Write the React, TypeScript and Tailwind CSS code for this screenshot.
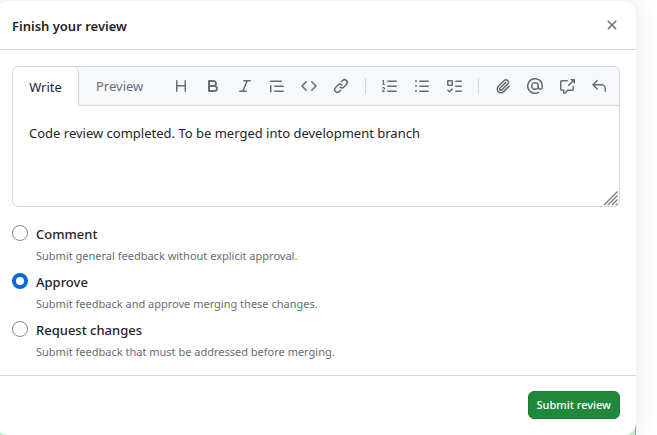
import { useState } from 'react';

type Tool = { label: string; path: string };

const toolGroups: Tool[][] = [
  [
    {
      label: 'Heading',
      path: 'M3.75 2a.75.75 0 0 1 .75.75V7h7V2.75a.75.75 0 0 1 1.5 0v10.5a.75.75 0 0 1-1.5 0V8.5h-7v4.75a.75.75 0 0 1-1.5 0V2.75A.75.75 0 0 1 3.75 2Z',
    },
    {
      label: 'Bold',
      path: 'M4 2h4.5a3.501 3.501 0 0 1 2.852 5.53A3.499 3.499 0 0 1 9.5 14H4a1 1 0 0 1-1-1V3a1 1 0 0 1 1-1Zm1 7v3h4.5a1.5 1.5 0 0 0 0-3Zm3.5-2a1.5 1.5 0 0 0 0-3H5v3Z',
    },
    {
      label: 'Italic',
      path: 'M6 2.75A.75.75 0 0 1 6.75 2h6.5a.75.75 0 0 1 0 1.5h-2.505l-3.858 9H9.25a.75.75 0 0 1 0 1.5h-6.5a.75.75 0 0 1 0-1.5h2.505l3.858-9H6.75A.75.75 0 0 1 6 2.75Z',
    },
    {
      label: 'Quote',
      path: 'M1.75 2.5h10.5a.75.75 0 0 1 0 1.5H1.75a.75.75 0 0 1 0-1.5Zm4 5h8.5a.75.75 0 0 1 0 1.5h-8.5a.75.75 0 0 1 0-1.5Zm0 5h8.5a.75.75 0 0 1 0 1.5h-8.5a.75.75 0 0 1 0-1.5ZM2.5 7.75v6a.75.75 0 0 1-1.5 0v-6a.75.75 0 0 1 1.5 0Z',
    },
    {
      label: 'Code',
      path: 'm11.28 3.22 4.25 4.25a.75.75 0 0 1 0 1.06l-4.25 4.25a.749.749 0 0 1-1.275-.326.749.749 0 0 1 .215-.734L13.94 8l-3.72-3.72a.749.749 0 0 1 .326-1.275.749.749 0 0 1 .734.215Zm-6.56 0a.751.751 0 0 1 1.042.018.751.751 0 0 1 .018 1.042L2.06 8l3.72 3.72a.749.749 0 0 1-.326 1.275.749.749 0 0 1-.734-.215L.47 8.53a.75.75 0 0 1 0-1.06Z',
    },
    {
      label: 'Link',
      path: 'm7.775 3.275 1.25-1.25a3.5 3.5 0 1 1 4.95 4.95l-2.5 2.5a3.5 3.5 0 0 1-4.95 0 .751.751 0 0 1 .018-1.042.751.751 0 0 1 1.042-.018 1.998 1.998 0 0 0 2.83 0l2.5-2.5a2.002 2.002 0 0 0-2.83-2.83l-1.25 1.25a.751.751 0 0 1-1.042-.018.751.751 0 0 1-.018-1.042Zm-4.69 9.64a1.998 1.998 0 0 0 2.83 0l1.25-1.25a.751.751 0 0 1 1.042.018.751.751 0 0 1 .018 1.042l-1.25 1.25a3.5 3.5 0 1 1-4.95-4.95l2.5-2.5a3.5 3.5 0 0 1 4.95 0 .751.751 0 0 1-.018 1.042.751.751 0 0 1-1.042.018 1.998 1.998 0 0 0-2.83 0l-2.5 2.5a1.998 1.998 0 0 0 0 2.83Z',
    },
  ],
  [
    {
      label: 'Numbered list',
      path: 'M5 3.25a.75.75 0 0 1 .75-.75h8.5a.75.75 0 0 1 0 1.5h-8.5A.75.75 0 0 1 5 3.25Zm0 5a.75.75 0 0 1 .75-.75h8.5a.75.75 0 0 1 0 1.5h-8.5A.75.75 0 0 1 5 8.25Zm0 5a.75.75 0 0 1 .75-.75h8.5a.75.75 0 0 1 0 1.5h-8.5a.75.75 0 0 1-.75-.75ZM.924 10.32a.5.5 0 0 1-.851-.525l.001-.001.001-.002.002-.004.007-.011c.097-.144.215-.273.348-.384.228-.19.588-.392 1.068-.392.468 0 .858.181 1.126.484.259.294.377.673.377 1.038 0 .987-.686 1.495-1.156 1.845l-.047.035c-.303.225-.522.4-.654.597h1.357a.5.5 0 0 1 0 1H.5a.5.5 0 0 1-.5-.5c0-1.005.692-1.52 1.167-1.875l.035-.025c.531-.396.8-.625.8-1.078a.57.57 0 0 0-.128-.376C1.806 10.068 1.695 10 1.5 10a.658.658 0 0 0-.429.163.835.835 0 0 0-.144.153ZM2.003 2.5V6h.503a.5.5 0 0 1 0 1H.5a.5.5 0 0 1 0-1h.503V3.308l-.28.14a.5.5 0 0 1-.446-.895l1.003-.5a.5.5 0 0 1 .723.447Z',
    },
    {
      label: 'Unordered list',
      path: 'M5.75 2.5h8.5a.75.75 0 0 1 0 1.5h-8.5a.75.75 0 0 1 0-1.5Zm0 5h8.5a.75.75 0 0 1 0 1.5h-8.5a.75.75 0 0 1 0-1.5Zm0 5h8.5a.75.75 0 0 1 0 1.5h-8.5a.75.75 0 0 1 0-1.5ZM2 14a1 1 0 1 1 0-2 1 1 0 0 1 0 2Zm1-6a1 1 0 1 1-2 0 1 1 0 0 1 2 0ZM2 4a1 1 0 1 1 0-2 1 1 0 0 1 0 2Z',
    },
    {
      label: 'Task list',
      path: 'M2 2h4a1 1 0 0 1 1 1v4a1 1 0 0 1-1 1H2a1 1 0 0 1-1-1V3a1 1 0 0 1 1-1Zm4.655 8.595a.75.75 0 0 1 0 1.06L4.03 14.28a.75.75 0 0 1-1.06 0l-1.5-1.5a.749.749 0 0 1 .326-1.275.749.749 0 0 1 .734.215l.97.97 2.095-2.095a.75.75 0 0 1 1.06 0ZM9.75 2.5h5.5a.75.75 0 0 1 0 1.5h-5.5a.75.75 0 0 1 0-1.5Zm0 5h5.5a.75.75 0 0 1 0 1.5h-5.5a.75.75 0 0 1 0-1.5Zm0 5h5.5a.75.75 0 0 1 0 1.5h-5.5a.75.75 0 0 1 0-1.5Zm-7.25-9v3h3v-3Z',
    },
  ],
  [
    {
      label: 'Attach files',
      path: 'M12.212 3.02a1.753 1.753 0 0 0-2.478.003l-5.83 5.83a3.007 3.007 0 0 0-.88 2.127c0 .795.315 1.551.88 2.116.567.567 1.333.89 2.126.89.79 0 1.548-.321 2.116-.89l5.48-5.48a.75.75 0 0 1 1.061 1.06l-5.48 5.48a4.492 4.492 0 0 1-3.177 1.33c-1.2 0-2.345-.487-3.187-1.33a4.483 4.483 0 0 1-1.32-3.177c0-1.195.475-2.341 1.32-3.186l5.83-5.83a3.25 3.25 0 0 1 5.553 2.297c0 .863-.343 1.691-.953 2.301L7.439 12.39c-.375.377-.884.59-1.416.593a1.998 1.998 0 0 1-1.412-.593 1.992 1.992 0 0 1 0-2.828l5.48-5.48a.751.751 0 0 1 1.042.018.751.751 0 0 1 .018 1.042l-5.48 5.48a.492.492 0 0 0 0 .707.499.499 0 0 0 .352.154.51.51 0 0 0 .356-.154l5.833-5.827a1.755 1.755 0 0 0 0-2.481Z',
    },
    {
      label: 'Mention',
      path: 'M4.75 2.37a6.501 6.501 0 0 0 6.5 11.26.75.75 0 0 1 .75 1.298A7.999 7.999 0 0 1 .989 4.148 8 8 0 0 1 16 7.75v1.5a2.75 2.75 0 0 1-5.072 1.475 3.999 3.999 0 0 1-6.65-4.19A4 4 0 0 1 12 8v1.25a1.25 1.25 0 0 0 2.5 0V7.867a6.5 6.5 0 0 0-9.75-5.496ZM10.5 8a2.5 2.5 0 1 0-5 0 2.5 2.5 0 0 0 5 0Z',
    },
    {
      label: 'Reference',
      path: 'M2.75 3.5a.25.25 0 0 0-.25.25v7.5c0 .138.112.25.25.25h2a.75.75 0 0 1 .75.75v2.19l2.72-2.72a.749.749 0 0 1 .53-.22h4.5a.25.25 0 0 0 .25-.25v-2.5a.75.75 0 0 1 1.5 0v2.5A1.75 1.75 0 0 1 13.25 13H9.06l-2.573 2.573A1.458 1.458 0 0 1 4 14.543V13H2.75A1.75 1.75 0 0 1 1 11.25v-7.5C1 2.784 1.784 2 2.75 2h5.5a.75.75 0 0 1 0 1.5ZM16 1.25v4.146a.25.25 0 0 1-.427.177L14.03 4.03l-3.75 3.75a.749.749 0 0 1-1.275-.326.749.749 0 0 1 .215-.734l3.75-3.75-1.543-1.543A.25.25 0 0 1 11.604 1h4.146a.25.25 0 0 1 .25.25Z',
    },
    {
      label: 'Saved replies',
      path: 'M6.78 1.97a.75.75 0 0 1 0 1.06L3.81 6h6.44A4.75 4.75 0 0 1 15 10.75v2.5a.75.75 0 0 1-1.5 0v-2.5a3.25 3.25 0 0 0-3.25-3.25H3.81l2.97 2.97a.749.749 0 0 1-.326 1.275.749.749 0 0 1-.734-.215L1.47 7.28a.75.75 0 0 1 0-1.06l4.25-4.25a.75.75 0 0 1 1.06 0Z',
    },
  ],
];

const closePath =
  'M3.72 3.72a.75.75 0 0 1 1.06 0L8 6.94l3.22-3.22a.749.749 0 0 1 1.275.326.749.749 0 0 1-.215.734L9.06 8l3.22 3.22a.749.749 0 0 1-.326 1.275.749.749 0 0 1-.734-.215L8 9.06l-3.22 3.22a.751.751 0 0 1-1.042-.018.751.751 0 0 1-.018-1.042L6.94 8 3.72 4.78a.75.75 0 0 1 0-1.06Z';

const options = [
  { id: 'comment', label: 'Comment', hint: 'Submit general feedback without explicit approval.' },
  { id: 'approve', label: 'Approve', hint: 'Submit feedback and approve merging these changes.' },
  { id: 'request', label: 'Request changes', hint: 'Submit feedback that must be addressed before merging.' },
];

function IconButton({ label, path }: Tool) {
  return (
    <button
      type="button"
      aria-label={label}
      className="flex size-8 items-center justify-center text-[#656d76]"
    >
      <svg aria-hidden="true" viewBox="0 0 16 16" fill="currentColor" className="size-4">
        <path d={path} />
      </svg>
    </button>
  );
}

function Toolbar() {
  return (
    <div role="toolbar" aria-label="Formatting" className="ml-auto flex items-center pr-1">
      {toolGroups.map((group, i) => (
        <div key={i} className="flex items-center">
          {i > 0 && <span className="mx-2 h-4 w-px bg-[#d0d7de]" />}
          {group.map((tool) => (
            <IconButton key={tool.label} {...tool} />
          ))}
        </div>
      ))}
    </div>
  );
}

function Editor() {
  const [text, setText] = useState('Code review completed. To be merged into development branch');
  return (
    <div className="relative rounded-md border border-[#d0d7de] bg-white">
      <div className="flex h-[39px] rounded-t-md border-b border-[#d0d7de] bg-[#f6f8fa]">
        <div role="tablist" className="flex text-[13px]">
          <button
            role="tab"
            aria-selected="true"
            type="button"
            className="-mb-px w-[66px] rounded-t-md border-r border-[#d0d7de] bg-white pt-0.5 text-[#1f2328]"
          >
            Write
          </button>
          <button role="tab" aria-selected="false" type="button" className="px-[17px] pt-0.5 text-[#656d76]">
            Preview
          </button>
        </div>
        <Toolbar />
      </div>
      <textarea
        aria-label="Review comment"
        value={text}
        onChange={(e) => setText(e.target.value)}
        className="block h-[100px] w-full resize-none rounded-md px-4 pt-[17px] pb-4 text-[13px] leading-5 text-[#1f2328] outline-none"
      />
      <svg
        aria-hidden="true"
        viewBox="0 0 16 16"
        className="pointer-events-none absolute right-0 bottom-0 size-4"
        fill="none"
        stroke="#7b7b7b"
        strokeWidth="1.3"
      >
        <path d="M1 15 14.5 1.5M5 15 14.5 5.5M9 15 14.5 9.5M13 15 14.5 13.5" />
      </svg>
    </div>
  );
}

export default function App() {
  const [choice, setChoice] = useState('approve');
  return (
    <div className="relative isolate overflow-hidden bg-white pt-px pr-[21px] font-['Noto_Sans','Liberation_Sans',sans-serif] text-[#1f2328]">
      <div className="absolute right-[21px] bottom-0 left-0 -z-10 h-3 border-r border-[#8fb3a0] bg-[#d1f0dc]" />
      <form
        aria-labelledby="review-title"
        onSubmit={(e) => e.preventDefault()}
        className="-ml-1 rounded-xl bg-white shadow-[0_0_24px_rgba(37,41,46,0.12)]"
      >
        <header className="flex h-[49px] items-center justify-between border-b border-[#d0d7de] pr-2 pl-4">
          <h1 id="review-title" className="pt-1 text-[13px] font-semibold">
            Finish your review
          </h1>
          <IconButton label="Close" path={closePath} />
        </header>

        <div className="px-4 pt-4 pb-[11px]">
          <Editor />
          <fieldset aria-label="Review type" className="mt-[17px] flex flex-col gap-1">
            {options.map(({ id, label, hint }) => (
              <div key={id} className="flex gap-2">
                <input
                  type="radio"
                  id={id}
                  name="review"
                  checked={choice === id}
                  onChange={() => setChoice(id)}
                  aria-describedby={`${id}-hint`}
                  className="mt-px size-4 shrink-0 appearance-none rounded-full border border-[#818b98] bg-white checked:border-4 checked:border-[#0969da]"
                />
                <div>
                  <label htmlFor={id} className="block text-[13px] leading-5 font-medium">
                    {label}
                  </label>
                  <p id={`${id}-hint`} className="text-[11px] leading-6 text-[#656d76]">
                    {hint}
                  </p>
                </div>
              </div>
            ))}
          </fieldset>
        </div>

        <footer className="flex justify-end border-t border-[#d0d7de] px-4 pt-[15px] pb-4">
          <button
            type="submit"
            className="h-7 rounded-md border border-[#1c7a36] bg-[#1f883d] px-2 text-[11px] font-medium text-white"
          >
            Submit review
          </button>
        </footer>
      </form>
    </div>
  );
}
